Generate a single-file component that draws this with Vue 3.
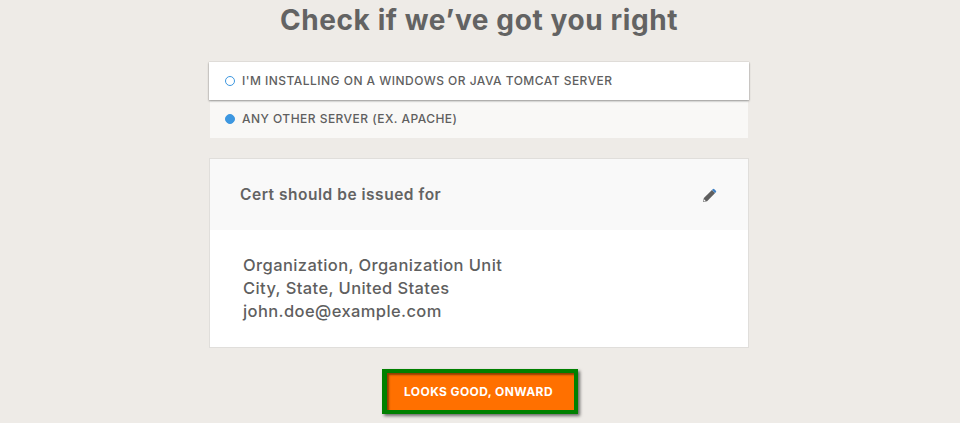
<script setup>
const lines = ['Organization, Organization Unit', 'City, State, United States', 'john.doe@example.com']
</script>

<template>
  <main class="page">
    <h1 class="title">Check if we’ve got you right</h1>
    <div class="options">
      <label class="opt opt-active"><span class="radio"></span><span class="opt-text">I'M INSTALLING ON A WINDOWS OR JAVA TOMCAT SERVER</span></label>
      <label class="opt opt-other"><span class="radio radio-on"></span><span class="opt-text">ANY OTHER SERVER (EX. APACHE)</span></label>
    </div>
    <section class="card">
      <header class="card-head">
        <h2 class="card-title">Cert should be issued for</h2>
        <svg class="pencil" viewBox="0 0 16 16" width="15" height="15" aria-hidden="true">
          <path fill="#5f5f5f" d="M1 15l1-4.4L10.6 2l3.4 3.4L5.4 14z"/>
          <path fill="#fff" d="M1.6 14.4l.5-2.4 1.9 1.9z"/>
          <path fill="#3d7fc4" d="M11.4 1.2a1.3 1.3 0 0 1 1.8 0l1.6 1.6a1.3 1.3 0 0 1 0 1.8l-.8.8L10.6 2z"/>
        </svg>
      </header>
      <div class="card-body">
        <p v-for="l in lines" :key="l" class="line">{{ l }}</p>
      </div>
    </section>
    <div class="actions"><button class="cta">LOOKS GOOD, ONWARD</button></div>
  </main>
</template>

<style scoped>
.page {
  width: 960px;
  height: 423px;
  box-sizing: border-box;
  padding-right: 2px;
  overflow: hidden;
  background: #eeebe7;
  font-family: Inter, "Liberation Sans", sans-serif;
  color: #5f5f5f;
  display: flex;
  flex-direction: column;
  align-items: center;
}
.title {
  margin: 0;
  margin-top: 2px;
  height: 36px;
  line-height: 36px;
  font-size: 28px;
  font-weight: 700;
  letter-spacing: 0.6px;
  color: #636363;
}
.options {
  margin-top: 24px;
  width: 540px;
  display: flex;
  flex-direction: column;
}
.opt {
  display: flex;
  align-items: center;
  gap: 7px;
  box-sizing: border-box;
}
.opt-text {
  font-size: 12px;
  line-height: 14px;
  margin-top: -1px;
  font-weight: 500;
  letter-spacing: 0.47px;
  color: #5f5f5f;
}
.opt-active {
  height: 38px;
  padding-left: 16px;
  background: #fff;
  box-shadow: 0 1px 2px rgba(0, 0, 0, 0.4), 0 0 1px rgba(0, 0, 0, 0.2);
  position: relative;
}
.opt-other {
  height: 38px;
  margin: 0 1px;
  padding-left: 15px;
  background: #f9f8f6;
}
.radio {
  width: 10px;
  height: 10px;
  box-sizing: border-box;
  border: 1.5px solid #3d97e0;
  border-radius: 50%;
  flex: none;
}
.radio-on { background: #3d97e0; }
.card {
  margin-top: 20px;
  width: 540px;
  box-sizing: border-box;
  border: 1px solid #e0dedb;
  background: #fff;
}
.card-head {
  height: 71px;
  background: #f9f9f9;
  display: flex;
  align-items: center;
  justify-content: space-between;
  padding: 0 30px;
}
.card-title {
  margin: 0;
  font-size: 15.5px;
  font-weight: 600;
  letter-spacing: 0.52px;
  color: #636363;
}
.pencil { display: block; margin-top: 2px; margin-right: 1px; }
.card-body {
  height: 117px;
  box-sizing: border-box;
  padding: 24px 33px 0;
}
.line {
  margin: 0;
  font-size: 16.5px;
  line-height: 23px;
  font-weight: 500;
  letter-spacing: 0.4px;
  color: #5f5f5f;
}
.actions {
  margin-top: 21px;
  margin-left: 2px;
}
.cta {
  display: block;
  width: 196px;
  height: 45px;
  box-sizing: border-box;
  border-style: solid;
  border-color: #008000;
  border-width: 4px 4px 4px 5px;
  background: #ff7000;
  color: #fff;
  font-family: inherit;
  font-size: 12px;
  font-weight: 700;
  letter-spacing: 0.4px;
  box-shadow: 2px 2px 3px rgba(0, 0, 0, 0.55), inset 2px 2px 2px rgba(0, 0, 0, 0.45);
  padding: 0 4px 0 0;
}
</style>
